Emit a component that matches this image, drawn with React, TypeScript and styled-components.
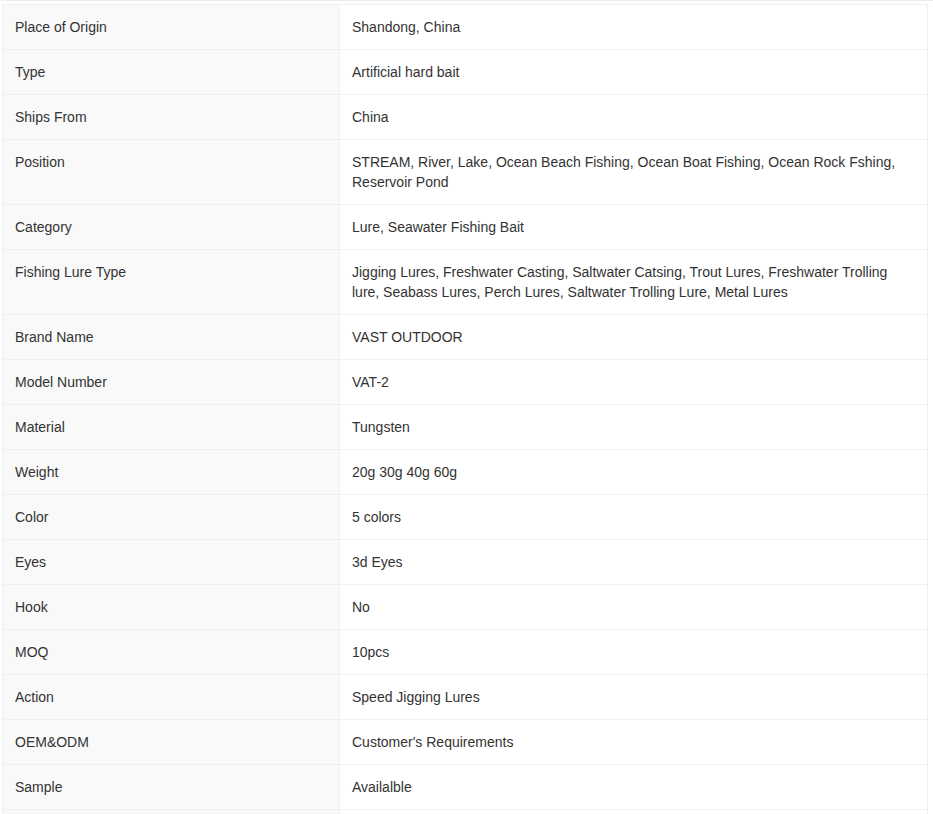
import React from "react"
import styled, { createGlobalStyle } from "styled-components"

const GlobalStyle = createGlobalStyle`
  html, body {
    margin: 0;
    padding: 0;
    background: #fff;
  }
  body {
    font-family: "Liberation Sans", Arial, sans-serif;
    color: #333;
  }
`

const specs: [string, string][] = [
  ["Place of Origin", "Shandong, China"],
  ["Type", "Artificial hard bait"],
  ["Ships From", "China"],
  ["Position", "STREAM, River, Lake, Ocean Beach Fishing, Ocean Boat Fishing, Ocean Rock Fshing, Reservoir Pond"],
  ["Category", "Lure, Seawater Fishing Bait"],
  ["Fishing Lure Type", "Jigging Lures, Freshwater Casting, Saltwater Catsing, Trout Lures, Freshwater Trolling lure, Seabass Lures, Perch Lures, Saltwater Trolling Lure, Metal Lures"],
  ["Brand Name", "VAST OUTDOOR"],
  ["Model Number", "VAT-2"],
  ["Material", "Tungsten"],
  ["Weight", "20g 30g 40g 60g"],
  ["Color", "5 colors"],
  ["Eyes", "3d Eyes"],
  ["Hook", "No"],
  ["MOQ", "10pcs"],
  ["Action", "Speed Jigging Lures"],
  ["OEM&ODM", "Customer's Requirements"],
  ["Sample", "Availalble"],
  // next row peeks in below the fold
  ["", ""],
]

const Page = styled.div`
  border-top: 1px solid #ececec;
  padding: 3px 0 0 2px;
`

const SpecTable = styled.table`
  width: 926px;
  border-collapse: collapse;
  table-layout: fixed;
  font-size: 14px;
  line-height: 20px;
`

const Label = styled.td`
  width: 312px;
  height: 20px;
  padding: 12px;
  background: #f9f9f9;
  border: 1px solid #f0f0f0;
  vertical-align: top;
  color: #333;
`

const Value = styled.td`
  height: 20px;
  padding: 12px;
  background: #fff;
  border: 1px solid #f0f0f0;
  vertical-align: top;
  color: #333;
`

export default function App() {
  return (
    <>
      <GlobalStyle />
      <Page>
        <SpecTable>
          <tbody>
            {specs.map(([k, v], i) => (
              <tr key={i}>
                <Label>{k}</Label>
                <Value>{v}</Value>
              </tr>
            ))}
          </tbody>
        </SpecTable>
      </Page>
    </>
  )
}
